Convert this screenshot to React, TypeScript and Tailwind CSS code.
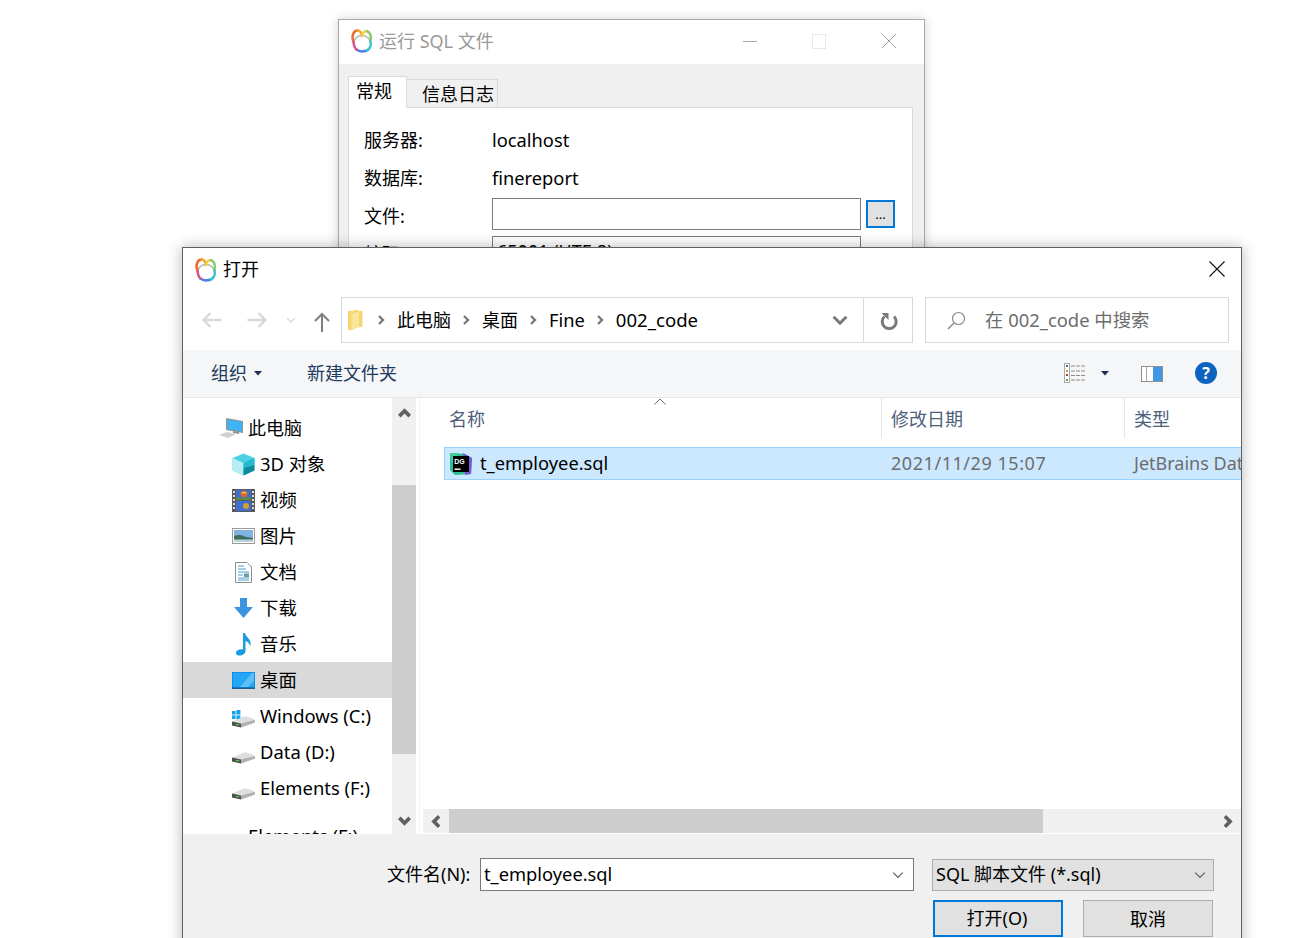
const uiFont = { fontFamily: '"Noto Sans", "Noto Sans CJK SC", sans-serif' };

const AppLogo = () => (
  <svg width="24" height="24" viewBox="0 0 24 24" fill="none" strokeWidth="2.5" strokeLinecap="round">
    <path d="M3.4 15 A8.6 8.6 0 0 1 20.6 15" stroke="#bdbdbd" strokeWidth="1.6" />
    <path d="M3.6 13 C1 7.5 3.5 1.6 7.5 1.6" stroke="#ea6a33" />
    <path d="M7.5 1.6 C10.5 1.6 11.5 4.5 11.8 7" stroke="#f2a62e" />
    <path d="M11.8 7 C12.5 4 14.5 1.8 17 2.2" stroke="#f3cf45" />
    <path d="M17 2.2 C20.5 3.2 21.8 8.5 20.4 12.5" stroke="#8ccb6a" />
    <path d="M20.4 12.5 C22 17 19 21.5 15 22" stroke="#3fc4cf" />
    <path d="M15 22 C12 22.8 8.5 22.2 6.5 20.6" stroke="#4a7fe6" />
    <path d="M6.5 20.6 C4.6 19 3.8 16.5 3.6 13" stroke="#d9558f" />
  </svg>
);

const Chevron = ({ dir = "right", color = "#7a7a7a", size = 10, width = 2.4 }: { dir?: string; color?: string; size?: number; width?: number }) => {
  const d = { right: "M3 1 L7 5 L3 9", left: "M7 1 L3 5 L7 9", down: "M1 3 L5 7 L9 3", up: "M1 7 L5 3 L9 7" }[dir];
  return (
    <svg width={size} height={size} viewBox="0 0 10 10" fill="none" className="shrink-0">
      <path d={d} stroke={color} strokeWidth={width} />
    </svg>
  );
};

const Caret = () => (
  <svg width="8" height="5" viewBox="0 0 8 5" className="shrink-0">
    <path d="M0 0 H8 L4 4.5 Z" fill="#1d2f4f" />
  </svg>
);

const Arrow = ({ flip = false, color = "#d9d9d9", strokeWidth = 2.4 }: { flip?: boolean; color?: string; strokeWidth?: number }) => (
  <svg width="20" height="16" viewBox="0 0 20 16" fill="none" className={flip ? "rotate-180 shrink-0" : "shrink-0"}>
    <path d="M19.5 8 H1.5 M8.5 1 L1.5 8 L8.5 15" stroke={color} strokeWidth={strokeWidth} />
  </svg>
);

const FolderIcon = () => (
  <svg width="15" height="21" viewBox="0 0 15 21" className="shrink-0">
    <path d="M0 1 H5 L6 0 H11 V17 L3 20 H0 Z" fill="#f6d56f" />
    <path d="M3.5 20.5 V4 L11 1 H14 V17 H11 Z" fill="#fae59c" />
    <path d="M11 1 V17 H14.5 V1 Z" fill="#f4d677" />
  </svg>
);

const DriveIcon = ({ windows = false }: { windows?: boolean }) => (
  <svg width="23" height="22" viewBox="0 0 23 22" className="mt-[2px]">
    {windows && (
      <g fill="#16a3ee">
        <rect x="0" y="5" width="3.6" height="3.6" />
        <rect x="4.4" y="4" width="4" height="4.6" />
        <rect x="0" y="9.4" width="3.6" height="3.6" />
        <rect x="4.4" y="9.4" width="4" height="4.2" />
      </g>
    )}
    <path d="M0 15.5 L12 10.5 C14 10 21 12 23 14 L23 16.5 L9 21.5 L0 19.5 Z" fill="#dedede" />
    <path d="M0 15.5 L9 17.5 V21.5 L0 19.5 Z" fill="#4f4f4f" />
    <path d="M9 17.5 L23 14 V16.5 L9 21.5 Z" fill="#b0b0b0" />
    <rect x="4" y="18" width="3.2" height="1.3" fill="#57c45a" />
  </svg>
);

const sideItems: { label: string; icon: React.ReactNode }[] = [
  {
    label: "3D 对象",
    icon: (
      <svg width="23" height="23" viewBox="0 0 23 23">
        <path d="M11.5 0.5 L22.5 5 V17.5 L11.5 22.5 L0.5 17.5 V5 Z" fill="#4dd0e1" />
        <path d="M0.5 5 L11.5 10 V22.5 L0.5 17.5 Z" fill="#b6edf2" />
        <path d="M11.5 10 L22.5 5 V12 L11.5 15 Z" fill="#25b9cf" />
        <path d="M11.5 15 L22.5 12 V17.5 L11.5 22.5 Z" fill="#0f8ba0" />
      </svg>
    ),
  },
  {
    label: "视频",
    icon: (
      <svg width="23" height="23" viewBox="0 0 23 23">
        <rect width="23" height="23" fill="#5a5a5a" />
        <rect x="4" y="1" width="15" height="10" fill="#3f6fd0" />
        <rect x="4" y="12" width="15" height="10" fill="#3f6fd0" />
        <circle cx="12" cy="5" r="3.4" fill="#d9662e" />
        <path d="M9.5 3 H14.5 V4.5 H9.5 Z" fill="#e8c33a" />
        <circle cx="14" cy="17" r="3" fill="#d9a02e" />
        <rect x="4" y="8.5" width="15" height="2.5" fill="#5c8a4a" />
        <g fill="#dcdcdc">
          <rect x="1" y="2" width="2" height="2" /><rect x="1" y="6" width="2" height="2" /><rect x="1" y="10" width="2" height="2" /><rect x="1" y="14" width="2" height="2" /><rect x="1" y="18" width="2" height="2" />
          <rect x="20" y="2" width="2" height="2" /><rect x="20" y="6" width="2" height="2" /><rect x="20" y="10" width="2" height="2" /><rect x="20" y="14" width="2" height="2" /><rect x="20" y="18" width="2" height="2" />
        </g>
      </svg>
    ),
  },
  {
    label: "图片",
    icon: (
      <svg width="23" height="16" viewBox="0 0 23 16">
        <rect x="0.5" y="0.5" width="22" height="15" fill="#fff" stroke="#9a9a9a" />
        <rect x="2" y="2" width="19" height="12" fill="#7fb2e0" />
        <path d="M2 8 C7 6 10 7 14 9 L21 10 V14 H2 Z" fill="#3f6b5c" />
        <path d="M2 11.5 H21 V14 H2 Z" fill="#b9d4d8" />
      </svg>
    ),
  },
  {
    label: "文档",
    icon: (
      <svg width="17" height="21" viewBox="0 0 17 21">
        <path d="M0.5 0.5 H12 L16.5 5 V20.5 H0.5 Z" fill="#fff" stroke="#8d8d8d" />
        <path d="M3 4 H9 M3 7 H11 M3 10 H14 M3 13 H8 M3 16 H14 M3 18 H14" stroke="#4a9ad8" strokeWidth="1" />
        <rect x="9" y="11.5" width="5" height="3.5" fill="#6f9a9a" />
      </svg>
    ),
  },
  {
    label: "下载",
    icon: (
      <svg width="19" height="20" viewBox="0 0 19 20">
        <path d="M6 0 H13 V9 H19 L9.5 20 L0 9 H6 Z" fill="#3d94de" />
      </svg>
    ),
  },
  {
    label: "音乐",
    icon: (
      <svg width="18" height="23" viewBox="0 0 18 23">
        <path d="M8 0 H10 C10.5 4 17 6 15.5 13 C14 10 12 8.5 10.5 8 V18 C10.5 21 6.5 23 3.5 22.5 C0.5 22 0 18.5 3 17 C5 16 7 16 8 16.5 Z" fill="#1a9de0" />
      </svg>
    ),
  },
  {
    label: "桌面",
    icon: (
      <svg width="23" height="17" viewBox="0 0 23 17">
        <rect width="23" height="17" fill="#0f8fe8" />
        <path d="M1 1 H22 V15 H1 Z" fill="#22a6f5" />
        <path d="M8 15 L20 1 H22 V9 L16 15 Z" fill="#5cc0f7" />
        <rect y="15.5" width="23" height="1.5" fill="#1b5f94" />
      </svg>
    ),
  },
  { label: "Windows (C:)", icon: <DriveIcon windows /> },
  { label: "Data (D:)", icon: <DriveIcon /> },
  { label: "Elements (F:)", icon: <DriveIcon /> },
];

export default function App() {
  return (
    <div className="relative h-[938px] w-[1307px] overflow-hidden bg-white text-[18px] text-black" style={uiFont}>
      {/* back window */}
      <div className="absolute left-[338px] top-[19px] w-[587px] h-[300px] border border-[#a9a9a9] bg-[#f0f0f0] shadow-[0_0_10px_rgba(0,0,0,0.18)]">
        <div className="flex h-[44px] items-center bg-white pb-[2px] pl-[11px] pr-[27px] text-[#999999]">
          <AppLogo />
          <span className="ml-[5px]">运行 SQL 文件</span>
          <div className="ml-auto flex items-center gap-[55px]">
            <div className="h-px w-[14px] bg-[#a8a8a8]" />
            <div className="h-[15px] w-[14px] border border-[#e8e8e8]" />
            <svg width="16" height="16" viewBox="0 0 16 16"><path d="M1 1 L15 15 M15 1 L1 15" stroke="#a0a0a0" strokeWidth="1" /></svg>
          </div>
        </div>
        <div className="relative ml-[9px] mt-[12px] flex h-[32px] items-end">
          <div className="relative z-10 flex h-[32px] w-[59px] items-start border border-b-0 border-[#dadada] bg-white pl-[7px] pt-[1px]">常规</div>
          <div className="flex h-[29px] w-[91px] items-center border border-l-0 border-[#d9d9d9] bg-[#f0f0f0] pl-[15px] pt-[2px]">信息日志</div>
        </div>
        <div className="ml-[9px] mr-[11px] -mt-px border border-[#d9d9d9] bg-white pl-[15px] pt-[13px] pr-[17px] h-[200px]">
          <div className="flex h-[38px] items-center"><span className="w-[128px]">服务器:</span><span className="text-[18.3px]">localhost</span></div>
          <div className="flex h-[38px] items-center"><span className="w-[128px]">数据库:</span><span className="text-[18.3px]">finereport</span></div>
          <div className="mt-[1px] flex h-[32px] items-center">
            <span className="w-[128px] pt-[4px]">文件:</span>
            <div className="h-[32px] w-[369px] border border-[#7a7a7a] bg-white" />
            <div className="ml-[5px] flex h-[28px] w-[29px] items-center justify-center border-2 border-[#0078d7] bg-[#e1e1e1] text-[13px] leading-none">...</div>
          </div>
          <div className="mt-[6px] flex h-[32px] items-center">
            <span className="w-[128px] pt-[4px]">编码:</span>
            <div className="h-[32px] w-[369px] border border-[#7a7a7a] pl-[4px] leading-[28px]">65001 (UTF-8)</div>
          </div>
        </div>
      </div>

      {/* open file dialog */}
      <div className="absolute left-[182px] top-[247px] w-[1060px] h-[720px] border border-[#5f5f5f] bg-white shadow-[0_0_14px_rgba(0,0,0,0.28)]">
        <div className="flex h-[49px] items-start pl-[11px] pr-[16px] pt-[10px]">
          <AppLogo />
          <span className="ml-[5px] leading-[22px]">打开</span>
          <svg className="ml-auto mt-[3px]" width="16" height="16" viewBox="0 0 16 16"><path d="M0.5 0.5 L15.5 15.5 M15.5 0.5 L0.5 15.5" stroke="#111" strokeWidth="1.1" /></svg>
        </div>

        <div className="flex h-[53px] items-start pr-[12px]">
          <div className="flex h-[46px] w-[158px] items-center pl-[19px]">
            <Arrow />
            <div className="ml-[25px]"><Arrow flip /></div>
            <div className="ml-[19px]"><Chevron dir="down" color="#dcdcdc" size={10} width={1.6} /></div>
            <svg className="ml-[18px] mt-[3px]" width="16" height="20" viewBox="0 0 16 20" fill="none"><path d="M8 20 V2 M1 9 L8 2 L15 9" stroke="#7f7f7f" strokeWidth="2" /></svg>
          </div>
          <div className="flex h-[46px] w-[572px] items-center border border-[#d9d9d9]">
            <div className="flex h-full flex-1 items-center pl-[6px]">
              <FolderIcon />
              <div className="ml-[13px]"><Chevron /></div>
              <span className="ml-[11px]">此电脑</span>
              <div className="ml-[10px]"><Chevron /></div>
              <span className="ml-[11px]">桌面</span>
              <div className="ml-[10px]"><Chevron /></div>
              <span className="ml-[11px] text-[18.3px]">Fine</span>
              <div className="ml-[10px]"><Chevron /></div>
              <span className="ml-[11px] text-[18.6px]">002_code</span>
              <div className="ml-auto mr-[15px]"><Chevron dir="down" size={16} width={1.9} /></div>
            </div>
            <div className="flex h-full w-[49px] items-center justify-center border-l border-[#d9d9d9] pt-[1px] pl-[1px]">
              <svg width="18" height="18" viewBox="0 0 18 18" fill="none">
                <path d="M4.4 4.5 A7 7 0 1 0 14 4.5" stroke="#7a7a7a" strokeWidth="3" />
                <path d="M1.5 1 H8.5 V8 Z" fill="#7a7a7a" />
              </svg>
            </div>
          </div>
          <div className="ml-[12px] flex h-[46px] flex-1 items-center border border-[#d9d9d9] pl-[21px] text-[#6d6d6d]">
            <svg width="19" height="19" viewBox="0 0 19 19" fill="none"><circle cx="11.5" cy="7.5" r="6" stroke="#8a8a8a" strokeWidth="1.2" /><path d="M7 12 L1 18" stroke="#8a8a8a" strokeWidth="1.4" /></svg>
            <span className="ml-[19px] text-[18.4px]">在 002_code 中搜索</span>
          </div>
        </div>

        <div className="flex h-[48px] items-center border-b border-[#e6e6e6] bg-[#f5f6f7] pb-[1px] pl-[28px] pr-[24px] text-[#1f3a5f]">
          <span>组织</span>
          <div className="ml-[7px]"><Caret /></div>
          <span className="ml-[45px]">新建文件夹</span>
          <div className="ml-auto flex items-center">
            <svg width="22" height="20" viewBox="0 0 22 20" fill="none">
              <rect x="0.5" y="0.5" width="5" height="19" fill="#fff" stroke="#a8a8a8" />
              <rect x="2" y="2" width="2" height="2" fill="#3a6ea5" /><rect x="2" y="7" width="2" height="2" fill="#b8a040" /><rect x="2" y="11" width="2" height="2" fill="#b03a3a" /><rect x="2" y="16" width="2" height="2" fill="#6a9a4a" />
              <path d="M7 3 H22 M7 8 H22 M7 12.5 H22 M7 17 H22" stroke="#8a8a8a" strokeDasharray="4 1" />
            </svg>
            <div className="ml-[15px]"><Caret /></div>
            <svg className="ml-[32px]" width="22" height="17" viewBox="0 0 22 17">
              <rect x="0.5" y="1.5" width="21" height="15" fill="#fff" stroke="#8f8f8f" />
              <rect x="5" y="2" width="1" height="14" fill="#a8a8a8" />
              <rect x="12" y="2" width="9" height="14" fill="#3f97e6" />
            </svg>
            <div className="ml-[32px] flex h-[22px] w-[22px] items-center justify-center rounded-full bg-[#0d63c0] text-[16px] font-bold leading-none text-white">?</div>
          </div>
        </div>

        <div className="flex h-[436px]">
          <div className="h-full w-[209px] overflow-hidden pt-[12px]">
            <div className="flex h-[36px] items-center pl-[36px] pt-[1px]">
              <svg width="25" height="21" viewBox="0 0 25 21">
                <path d="M7 0 L24 3 V15 L7 12 Z" fill="#8a949c" />
                <path d="M8.5 1.5 L23 4 V13.5 L8.5 11 Z" fill="#3db4f5" />
                <path d="M14 13 L20 14 V16 L14 15 Z" fill="#8a949c" />
                <path d="M0 17 L8 14 L17 16 L9 20 Z" fill="#cfcfcf" />
              </svg>
              <span className="ml-[4px]">此电脑</span>
            </div>
            {sideItems.map((item, i) => (
              <div key={i} className={`flex h-[36px] items-center pl-[49px] ${item.label === "桌面" ? "bg-[#d9d9d9]" : ""}`}>
                <div className="flex w-[23px] shrink-0 justify-center">{item.icon}</div>
                <span className="ml-[5px] whitespace-nowrap text-[18.4px]">{item.label}</span>
              </div>
            ))}
            <div className="mt-[12px] flex h-[36px] items-center pl-[65px]">
              <span className="whitespace-nowrap text-[18.4px]">Elements (F:)</span>
            </div>
          </div>

          <div className="flex h-full w-[24px] flex-col bg-[#f0f0f0]">
            <div className="flex h-[87px] items-start justify-center pl-[1px] pt-[9px]"><Chevron dir="up" color="#606060" size={13} width={2.8} /></div>
            <div className="h-[269px] bg-[#cdcdcd]" />
            <div className="flex flex-1 items-end justify-center pb-[7px] pl-[1px]"><Chevron dir="down" color="#606060" size={13} width={2.8} /></div>
          </div>

          <div className="w-[3px] bg-white" />
          <div className="w-[1px] bg-[#f0f0f0]" />

          <div className="flex flex-1 flex-col overflow-hidden">
            <div className="relative flex h-[40px] text-[#4c607a]">
              <svg className="absolute left-[234px] top-[0px]" width="12" height="7" viewBox="0 0 12 7" fill="none"><path d="M0.5 6.5 L6 1 L11.5 6.5" stroke="#6d6d6d" /></svg>
              <div className="flex h-full w-[462px] items-center border-r border-[#e5e5e5] pl-[29px] pt-[2px]">名称</div>
              <div className="flex h-full w-[243px] items-center border-r border-[#e5e5e5] pl-[9px] pt-[2px]">修改日期</div>
              <div className="flex h-full flex-1 items-center pl-[9px] pt-[2px]">类型</div>
            </div>
            <div className="ml-[24px] mt-[9px] flex h-[33px] items-center whitespace-nowrap border border-r-0 border-[#99d1ff] bg-[#cce8ff]">
              <svg className="ml-[4px] shrink-0" width="24" height="24" viewBox="0 0 24 24">
                <path d="M1 1 L16 2 L23 6 L22 22 L6 23 L1 18 Z" fill="#2dbd8f" />
                <path d="M14 1 L23 6 L22 22 L16 23 Z" fill="#7a55d8" />
                <path d="M1 1 L10 1 L3 12 Z" fill="#3fcf9a" />
                <rect x="4" y="4" width="16" height="16" fill="#000" />
                <text x="5.3" y="11.5" fontSize="7" fontWeight="700" fill="#fff" style={{ fontFamily: '"Liberation Sans", sans-serif' }}>DG</text>
                <rect x="5.5" y="16.5" width="6" height="1.4" fill="#fff" />
              </svg>
              <span className="ml-[7px] w-[411px] shrink-0 pb-[1px] text-[18.3px] leading-[24px]">t_employee.sql</span>
              <span className="w-[243px] shrink-0 text-[#6d6d6d] tracking-[0.55px]">2021/11/29 15:07</span>
              <span className="text-[#6d6d6d]">JetBrains DataGrip</span>
            </div>
            <div className="flex-1" />
            <div className="ml-[3px] flex h-[24px] items-center bg-[#f0f0f0]">
              <div className="flex w-[26px] justify-center"><Chevron dir="left" color="#606060" size={13} width={2.8} /></div>
              <div className="h-full w-[594px] bg-[#cdcdcd]" />
              <div className="flex flex-1 justify-end pr-[7px]"><Chevron dir="right" color="#606060" size={13} width={2.8} /></div>
            </div>
            <div className="h-px" />
          </div>
        </div>

        <div className="bg-[#f0f0f0] pt-[24px] h-[240px]">
          <div className="flex h-[33px] items-center">
            <span className="ml-[204px] w-[93px] whitespace-nowrap">文件名(N):</span>
            <div className="flex h-[33px] w-[434px] items-center justify-between border border-[#7a7a7a] bg-white pl-[3px] pr-[9px]">
              <span className="pb-[1px] text-[18.3px] leading-[24px]">t_employee.sql</span>
              <Chevron dir="down" color="#5f5f5f" size={12} width={1} />
            </div>
            <div className="ml-[18px] flex h-[32px] w-[282px] items-center justify-between border border-[#adadad] bg-[#e1e1e1] pl-[3px] pr-[7px]">
              <span>SQL 脚本文件 (*.sql)</span>
              <Chevron dir="down" color="#5f5f5f" size={12} width={1} />
            </div>
          </div>
          <div className="mt-[9px] flex h-[37px] pl-[750px]">
            <div className="flex h-full w-[130px] items-center justify-center border-2 border-[#0078d7] bg-[#e1e1e1] pr-[2px]">打开(O)</div>
            <div className="ml-[20px] flex h-full w-[130px] items-center justify-center border border-[#adadad] bg-[#e1e1e1] pt-[1px]">取消</div>
          </div>
        </div>
      </div>
    </div>
  );
}
